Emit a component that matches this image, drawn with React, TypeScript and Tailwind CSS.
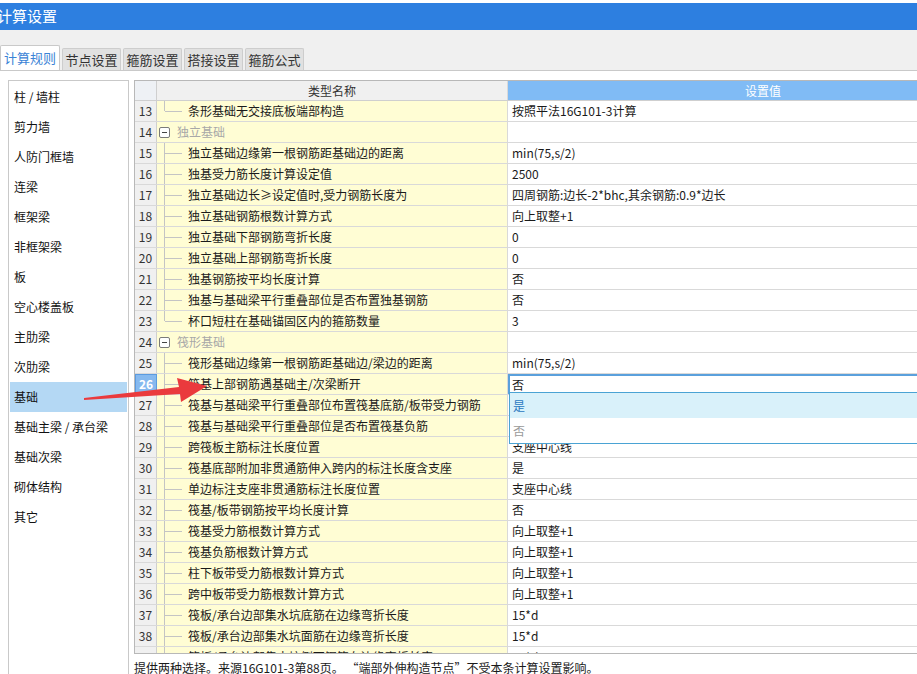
import React from 'react';

type Row = {
  no: number;
  name: string;
  value?: string;
  group?: boolean;
  last?: boolean;
};

const ROWS: Row[] = [
  { no: 13, name: '条形基础无交接底板端部构造', value: '按照平法16G101-3计算', last: true },
  { no: 14, name: '独立基础', group: true },
  { no: 15, name: '独立基础边缘第一根钢筋距基础边的距离', value: 'min(75,s/2)' },
  { no: 16, name: '独基受力筋长度计算设定值', value: '2500' },
  { no: 17, name: '独立基础边长≥设定值时,受力钢筋长度为', value: '四周钢筋:边长-2*bhc,其余钢筋:0.9*边长' },
  { no: 18, name: '独立基础钢筋根数计算方式', value: '向上取整+1' },
  { no: 19, name: '独立基础下部钢筋弯折长度', value: '0' },
  { no: 20, name: '独立基础上部钢筋弯折长度', value: '0' },
  { no: 21, name: '独基钢筋按平均长度计算', value: '否' },
  { no: 22, name: '独基与基础梁平行重叠部位是否布置独基钢筋', value: '否' },
  { no: 23, name: '杯口短柱在基础锚固区内的箍筋数量', value: '3', last: true },
  { no: 24, name: '筏形基础', group: true },
  { no: 25, name: '筏形基础边缘第一根钢筋距基础边/梁边的距离', value: 'min(75,s/2)' },
  { no: 26, name: '筏基上部钢筋遇基础主/次梁断开', value: '否' },
  { no: 27, name: '筏基与基础梁平行重叠部位布置筏基底筋/板带受力钢筋', value: '' },
  { no: 28, name: '筏基与基础梁平行重叠部位是否布置筏基负筋', value: '' },
  { no: 29, name: '跨筏板主筋标注长度位置', value: '支座中心线' },
  { no: 30, name: '筏基底部附加非贯通筋伸入跨内的标注长度含支座', value: '是' },
  { no: 31, name: '单边标注支座非贯通筋标注长度位置', value: '支座中心线' },
  { no: 32, name: '筏基/板带钢筋按平均长度计算', value: '否' },
  { no: 33, name: '筏基受力筋根数计算方式', value: '向上取整+1' },
  { no: 34, name: '筏基负筋根数计算方式', value: '向上取整+1' },
  { no: 35, name: '柱下板带受力筋根数计算方式', value: '向上取整+1' },
  { no: 36, name: '跨中板带受力筋根数计算方式', value: '向上取整+1' },
  { no: 37, name: '筏板/承台边部集水坑底筋在边缘弯折长度', value: '15*d' },
  { no: 38, name: '筏板/承台边部集水坑面筋在边缘弯折长度', value: '15*d' },
  { no: 39, name: '筏板/承台边部集水坑侧面钢筋在边缘弯折长度', value: '15*d' },
];

const SIDE_ITEMS = [
  '柱 / 墙柱',
  '剪力墙',
  '人防门框墙',
  '连梁',
  '框架梁',
  '非框架梁',
  '板',
  '空心楼盖板',
  '主肋梁',
  '次肋梁',
  '基础',
  '基础主梁 / 承台梁',
  '基础次梁',
  '砌体结构',
  '其它',
];

const TABS = ['计算规则', '节点设置', '箍筋设置', '搭接设置', '箍筋公式'];

const SELECTED_ROW = 26;

function TreeCell({ row }: { row: Row }) {
  if (row.group) {
    return (
      <div className="relative flex h-full items-center bg-[#fffdd4] pl-[2px]">
        <div className="flex h-[11px] w-[11px] items-center justify-center rounded-[2px] border border-[#7a7a7a] bg-white text-[10px] leading-none text-[#333]">
          <div className="h-px w-[5px] bg-[#444]" />
        </div>
        <span className="ml-[7px] text-[#a8a8a8]">{row.name}</span>
      </div>
    );
  }
  return (
    <div className="relative flex h-full items-center bg-[#fffdd4]">
      <div
        className={
          row.last
            ? 'absolute left-[7px] top-0 h-[10px] w-px bg-[#c4c4c4]'
            : 'absolute left-[7px] top-0 h-full w-px bg-[#c4c4c4]'
        }
      />
      <div className="absolute left-[8px] top-[10px] h-px w-[17px] bg-[#c4c4c4]" />
      <span className="ml-[31px] whitespace-nowrap text-[#1a1a1a]">{row.name}</span>
    </div>
  );
}

function GridRow({ row }: { row: Row }) {
  const selected = row.no === SELECTED_ROW;
  return (
    <div className="grid h-[21px] grid-cols-[22px_351px_510px] border-b border-[#d9d9d9]">
      <div
        className={
          selected
            ? 'flex items-center justify-center border border-[#5b9be0] bg-[#86b9ef] font-bold text-white'
            : 'flex items-center justify-center border-r border-[#cfcfcf] bg-[#f0f0f0] text-[#333]'
        }
      >
        {row.no}
      </div>
      <div className="border-r border-[#d9d9d9]">
        <TreeCell row={row} />
      </div>
      <div
        className={
          selected
            ? 'flex items-center border-2 border-b-0 border-[#5aa0dc] pl-[2px] text-[#1a1a1a]'
            : 'flex items-center pl-[4px] text-[#1a1a1a]'
        }
      >
        {row.value}
      </div>
    </div>
  );
}

function Sidebar() {
  return (
    <div className="h-[600px] w-[121px] shrink-0 border border-[#c9c9c9] bg-white pt-[1px]">
      {SIDE_ITEMS.map((item) => (
        <div
          key={item}
          className={
            item === '基础'
              ? 'mx-px flex h-[30px] items-center bg-[#b4d8f4] pl-[4px] text-[#111]'
              : 'mx-px flex h-[30px] items-center pl-[4px] text-[#111]'
          }
        >
          {item}
        </div>
      ))}
    </div>
  );
}

function SettingsGrid() {
  return (
    <div className="relative h-[574px] w-[900px] overflow-hidden border border-[#b8b8b8] bg-white">
      <div className="grid h-[20px] grid-cols-[22px_351px_510px] border-b border-[#cfcfcf]">
        <div className="border-r border-[#cfcfcf] bg-[#eef1f5]" />
        <div className="flex items-center justify-center border-r border-[#d9d9d9] bg-[#f0f0f0] text-[#333]">
          类型名称
        </div>
        <div className="flex items-center justify-center bg-[#80bbf5] text-white">
          设置值
        </div>
      </div>
      {ROWS.map((row) => (
        <GridRow key={row.no} row={row} />
      ))}
      {/* open dropdown under the row being edited */}
      <div className="absolute left-[374px] top-[311px] w-[520px] border border-[#4aa3d4] bg-white">
        <div className="flex h-[25px] items-center bg-[#d9f1fa] pl-[3px] text-[#2a78c0]">是</div>
        <div className="flex h-[25px] items-center pl-[3px] text-[#9a9a9a]">否</div>
      </div>
    </div>
  );
}

function Arrow() {
  return (
    <svg
      className="pointer-events-none absolute left-0 top-0"
      width="917"
      height="674"
      viewBox="0 0 917 674"
    >
      <polygon
        points="84,398 179,387 177,378 207,386 181,402 180,394 84,400"
        fill="#ea3a3d"
      />
    </svg>
  );
}

export default function App() {
  return (
    <div className="relative h-[674px] w-[917px] overflow-hidden bg-white font-['Noto_Sans_CJK_SC',sans-serif] text-[12px]">
      <div className="h-[3px] bg-white" />
      <div className="flex h-[27px] items-center bg-[#2d7fe0] text-[15px] text-white">
        <span className="-ml-[3px]">计算设置</span>
      </div>
      <div className="flex h-[40px] items-end gap-[2px] bg-[#f0f0f0]">
        {TABS.map((tab, idx) =>
          idx === 0 ? (
            <div
              key={tab}
              className="flex h-[25px] w-[60px] items-center justify-center rounded-t-[2px] border border-b-0 border-[#c9c9c9] bg-white text-[13px] text-[#3b83d6]"
            >
              {tab}
            </div>
          ) : (
            <div
              key={tab}
              className="flex h-[22px] w-[59px] items-center justify-center rounded-t-[2px] border border-b-0 border-[#cdcdcd] bg-[#e1e1e1] text-[13px] text-[#333]"
            >
              {tab}
            </div>
          ),
        )}
      </div>
      <div className="flex gap-[5px] border-t border-[#c9c9c9] bg-white pl-[8px] pt-[9px]">
        <Sidebar />
        <div className="flex flex-col">
          <SettingsGrid />
          <div className="mt-[5px] whitespace-nowrap text-[#1a1a1a]">
            提供两种选择。来源16G101-3第88页。 “端部外伸构造节点”不受本条计算设置影响。
          </div>
        </div>
      </div>
      <Arrow />
    </div>
  );
}
